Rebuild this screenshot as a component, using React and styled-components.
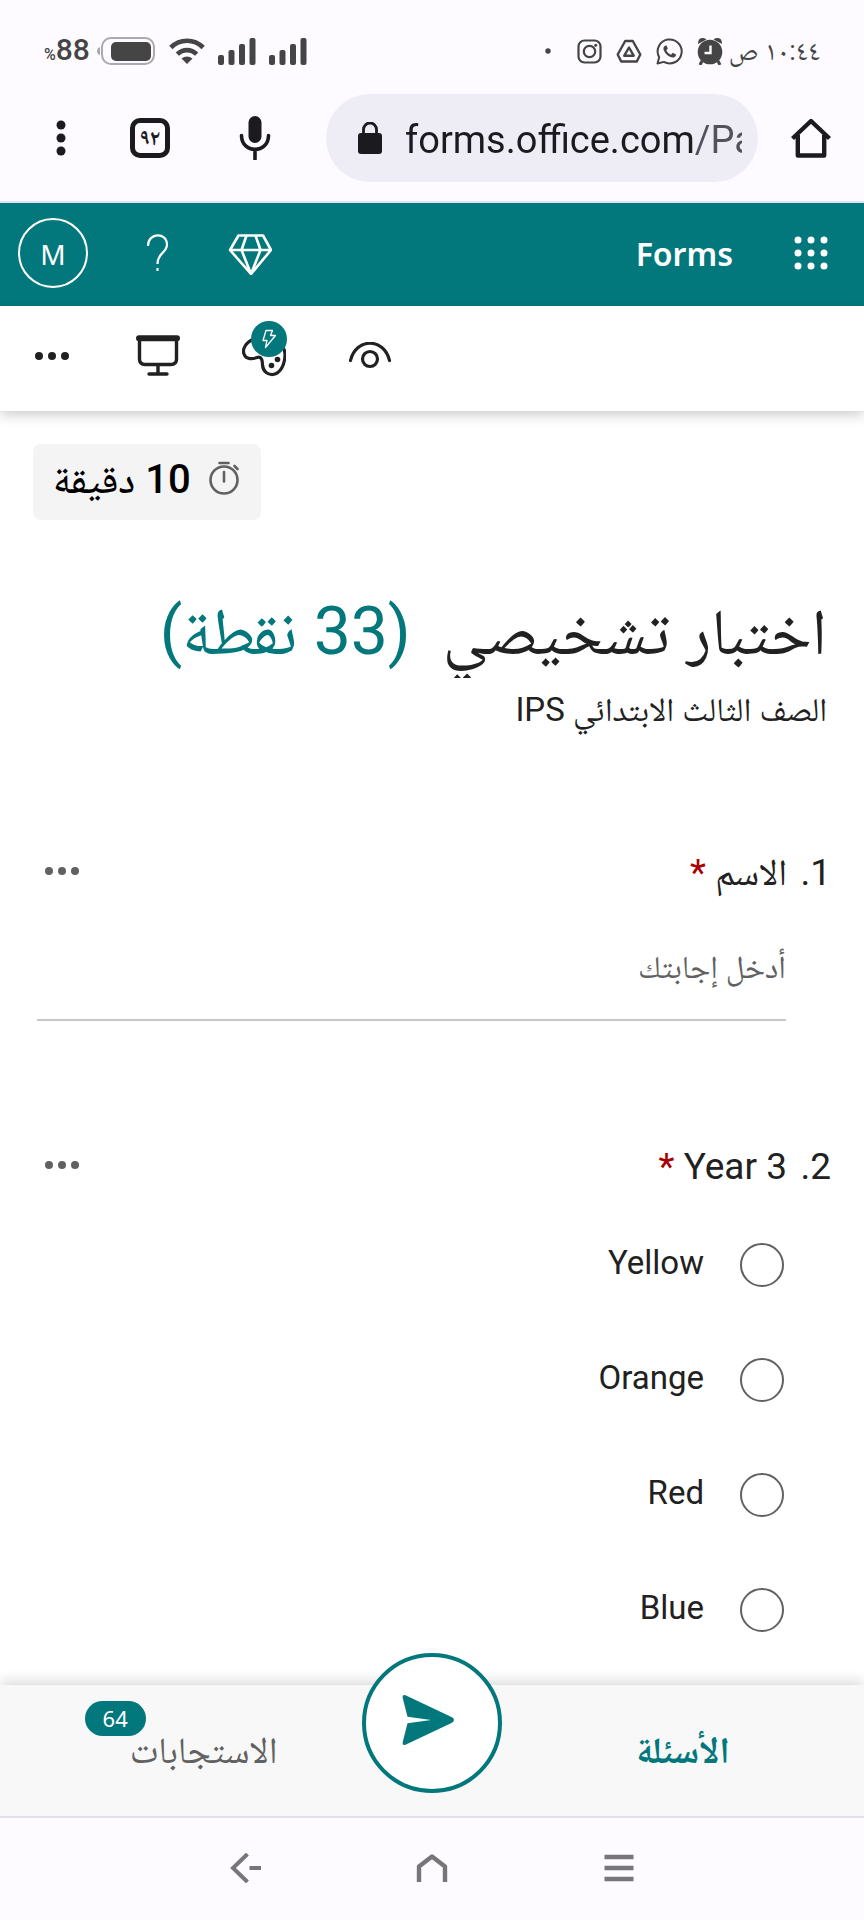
import React, { useState } from "react";
import styled, { createGlobalStyle } from "styled-components";

const TEAL = "#03787c";
const INK = "#212121";
const GREY = "#616161";
const CHROME_INK = "#1b1b1f";
const STATUS_INK = "#454545";

const GlobalStyle = createGlobalStyle`
  * {
    box-sizing: border-box;
  }

  body {
    margin: 0;
    background: #ffffff;
    color: ${INK};
    font-family: Roboto, "Noto Naskh Arabic", "Noto Sans", "DejaVu Sans", sans-serif;
  }

  button,
  input {
    font-family: inherit;
    margin: 0;
  }
`;

const PageS = styled.div`
  min-height: 100vh;
  display: flex;
  flex-direction: column;
`;

const IconButton = styled.button`
  display: flex;
  align-items: center;
  justify-content: center;
  flex: none;
  width: ${({ $width }) => $width || 44}px;
  height: 44px;
  padding: 0;
  border: none;
  background: none;
  color: inherit;
  cursor: pointer;

  svg {
    flex: none;
    display: block;
  }
`;

// phone status bar
const StatusBarS = styled.header`
  display: flex;
  justify-content: space-between;
  align-items: center;
  height: 94px;
  padding: 8px 44px 0;
  background: #fdfbff;
  color: ${STATUS_INK};

  svg {
    display: block;
    flex: none;
  }
`;

const StatusGroup = styled.div`
  display: flex;
  align-items: center;
  gap: ${({ $gap }) => $gap}px;
`;

const Clock = styled.time`
  font-size: 27px;
  line-height: 32px;
  margin-left: -8px;
`;

const BatteryLevel = styled.span`
  direction: ltr;
  font-size: 30px;
  font-weight: 500;
  line-height: 32px;
  margin-right: -6px;
  padding-top: 3px;

  small {
    font-size: 16px;
  }
`;

// browser toolbar
const BrowserBarS = styled.div`
  display: flex;
  align-items: center;
  height: 109px;
  padding: 0 31px 19px 39px;
  border-bottom: 2px solid #e2e0ec;
  background: #fdfbff;
  color: ${CHROME_INK};
`;

const AddressBar = styled.label`
  direction: ltr;
  display: flex;
  align-items: center;
  flex: 1;
  min-width: 0;
  height: 88px;
  margin: 0 31px 0 33px;
  padding: 0 16px 0 31px;
  border-radius: 44px;
  background: #eeedf6;

  svg {
    flex: none;
  }
`;

/* the host is dark, the path after it is dimmed */
const AddressInput = styled.input`
  flex: 1;
  min-width: 0;
  margin-left: 22px;
  padding: 4px 0 0;
  border: none;
  outline: none;
  font-size: 38px;
  line-height: 48px;
  color: transparent;
  background: linear-gradient(90deg, ${CHROME_INK} 290px, #53525c 290px);
  background-clip: text;
`;

const TabCount = styled.span`
  display: flex;
  align-items: center;
  justify-content: center;
  width: 40px;
  height: 40px;
  border: 5px solid ${CHROME_INK};
  border-radius: 10px;
  font-size: 22px;
  font-weight: 700;
  line-height: 24px;
`;

// Forms header
const SuiteBarS = styled.div`
  display: flex;
  align-items: center;
  height: 103px;
  padding: 0 31px 4px 18px;
  background: ${TEAL};
  color: #ffffff;
`;

const AppName = styled.a`
  margin-right: 56px;
  margin-left: auto;
  color: #ffffff;
  font-family: "Noto Sans", sans-serif;
  font-size: 32px;
  font-weight: 600;
  line-height: 48px;
  text-decoration: none;
  padding-top: 2px;
`;

const Avatar = styled.button`
  width: 70px;
  height: 70px;
  padding: 2px 0 0;
  border: 2px solid #ffffff;
  border-radius: 50%;
  background: none;
  color: #ffffff;
  font-family: "Noto Sans", sans-serif;
  font-size: 28px;
  cursor: pointer;
`;

const SuiteActions = styled.div`
  display: flex;
  align-items: center;
  gap: 48px;
`;

const CommandBarS = styled.div`
  direction: ltr;
  display: flex;
  align-items: center;
  gap: 62px;
  height: 105px;
  padding: 0 30px 6px;
  background: #ffffff;
  box-shadow: 0 4px 12px rgba(0, 0, 0, 0.2);
`;

const ThemeButton = styled(IconButton)`
  position: relative;
`;

const ThemeBadge = styled.span`
  position: absolute;
  top: -13px;
  right: -1px;
  display: flex;
  align-items: center;
  justify-content: center;
  width: 36px;
  height: 36px;
  border-radius: 50%;
  background: ${TEAL};
  color: #ffffff;
`;

// form body
const MainS = styled.main`
  flex: 1;
  padding: 33px 33px 18px;
`;

const Timer = styled.div`
  direction: ltr;
  display: flex;
  align-items: center;
  gap: 18px;
  width: fit-content;
  height: 76px;
  padding: 0 20px 4px;
  border-radius: 8px;
  background: #f4f4f4;
  color: #000000;
  font-size: 40px;
  font-weight: 500;
  line-height: 48px;
`;

const FormTitle = styled.h1`
  margin: 70px 4px 8px;
  padding-bottom: 4px;
  overflow: hidden;
  font-size: 65px;
  font-weight: 400;
  line-height: 84px;
`;

const Points = styled.span`
  margin-right: 32px;
  color: ${TEAL};
  font-size: 66px;
`;

const Subtitle = styled.p`
  margin: 0 4px 115px;
  font-size: 33px;
  line-height: 48px;
`;

const QuestionS = styled.section`
  & + & {
    margin-top: 122px;
  }
`;

const QuestionHead = styled.div`
  display: flex;
  align-items: flex-start;
  height: 48px;
  font-size: 37px;
  line-height: 48px;

  button {
    color: ${GREY};
  }
`;

const QuestionNumber = styled.span`
  width: 44px;
`;

const QuestionText = styled.h2`
  flex: 1;
  margin: 0;
  font-size: 37px;
  font-weight: 400;
  line-height: 48px;
`;

const Required = styled.span`
  color: #a80000;
`;

const AnswerInput = styled.input`
  display: block;
  width: calc(100% - 49px);
  height: 108px;
  margin: 16px 45px 0 4px;
  padding: 2px 0 0;
  border: none;
  border-bottom: 2px solid #c8c8c8;
  outline: none;
  background: none;
  color: ${INK};
  font-size: 32px;

  &::placeholder {
    color: ${GREY};
    opacity: 1;
  }
`;

const OptionList = styled.div`
  margin: 16px 47px 0 0;
`;

const Option = styled.label`
  display: flex;
  align-items: center;
  gap: 36px;
  height: 115px;
  font-size: 33px;
  line-height: 48px;
  cursor: pointer;

  span {
    padding-bottom: 3px;
  }
`;

const Radio = styled.input`
  appearance: none;
  width: 44px;
  height: 44px;
  border: 2px solid ${GREY};
  border-radius: 50%;

  &:checked {
    border: 12px solid ${TEAL};
  }
`;

// footer with tabs
const TabBarS = styled.nav`
  display: grid;
  grid-template-columns: 1fr 140px 1fr;
  height: 133px;
  border-bottom: 2px solid #e2e0ec;
  background: #f8f8f8;
  box-shadow: 0 -4px 12px rgba(0, 0, 0, 0.14);
`;

const TabButton = styled.button`
  display: flex;
  justify-content: center;
  padding: 16px 0 0;
  border: none;
  background: none;
  color: ${({ $active }) => ($active ? TEAL : GREY)};
  font-size: 37px;
  font-weight: ${({ $active }) => ($active ? 700 : 400)};
  line-height: 48px;
  cursor: pointer;
`;

const TabLabel = styled.span`
  padding-top: 26px;
`;

const CountBadge = styled.span`
  height: 35px;
  padding: 0 18px;
  margin-right: -16px;
  border-radius: 18px;
  background: ${TEAL};
  color: #ffffff;
  font-family: "Noto Sans", sans-serif;
  font-size: 22px;
  font-weight: 400;
  line-height: 35px;
`;

const SendButton = styled.button`
  display: flex;
  align-items: center;
  justify-content: center;
  width: 140px;
  height: 140px;
  margin-top: -32px;
  padding: 0 8px 6px 0;
  border: 4px solid ${TEAL};
  border-radius: 50%;
  background: #ffffff;
  color: ${TEAL};
  cursor: pointer;
`;

const SystemNavS = styled.nav`
  display: flex;
  justify-content: center;
  gap: 143px;
  height: 102px;
  padding-top: 28px;
  background: #fdfbff;
  color: #767578;
`;

const Dots = ({ r = 4, step = 13 }) => (
  <svg width="36" height="12" viewBox="-18 -6 36 12" fill="currentColor">
    <circle cx={-step} r={r} />
    <circle r={r} />
    <circle cx={step} r={r} />
  </svg>
);

const SignalIcon = () => (
  <svg width="38" height="28" viewBox="0 0 38 28" fill="currentColor">
    <rect x="0" y="18" width="6" height="10" rx="2" />
    <rect x="10.500" y="13" width="6" height="15" rx="2" />
    <rect x="21" y="7" width="6" height="21" rx="2" />
    <rect x="31.500" y="1" width="6" height="27" rx="2" />
  </svg>
);

const WifiIcon = () => (
  <svg width="36" height="28" viewBox="0 0 36 28" fill="none" stroke="currentColor" strokeWidth="4.600">
    <path d="M1.800 10.500C11 1.500 25 1.500 34.200 10.500" />
    <path d="M8.300 17.200C14 11.700 22 11.700 27.700 17.200" />
    <path d="M12.500 21.500Q18 17.500 23.500 21.500L18 27Z" fill="currentColor" stroke="none" />
  </svg>
);

const BatteryIcon = () => (
  <svg width="59" height="28" viewBox="0 0 59 28">
    <path d="M3 10Q0 11 0 14T3 18Z" fill="#aaa9ac" />
    <rect x="5" y="1" width="52" height="26" rx="9" fill="none" stroke="#aaa9ac" strokeWidth="2" />
    <rect x="14" y="5" width="40" height="19" rx="5" fill="currentColor" />
  </svg>
);

const AlarmIcon = () => (
  <svg width="26" height="28" viewBox="0 0 26 28" fill="currentColor">
    <circle cx="13" cy="15" r="12.300" />
    <path d="M1 7Q1 1 5 1Q8 0.500 9.500 2.500Z" />
    <path d="M25 7Q25 1 21 1Q18 0.500 16.500 2.500Z" />
    <path d="M5 24L3 28M21 24L23 28" stroke="currentColor" strokeWidth="3" />
    <path d="M13.500 8.500V16H7.500" fill="none" stroke="#fdfbff" strokeWidth="2.400" />
  </svg>
);

const WhatsAppIcon = () => (
  <svg width="27" height="27" viewBox="0 0 27 27">
    <path
      d="M1.500 25.500L3.200 19.300A12 12 0 1 1 7.800 23.900Z"
      fill="none"
      stroke="currentColor"
      strokeWidth="2"
      strokeLinejoin="round"
    />
    <path
      d="M9.300 7.500Q7 8.500 7.400 11.500Q8.500 15 12 17.800Q15.500 20.300 18.300 19.300Q20.300 18.300 20 16.500L16.800 14.800L15 16.800Q11.800 15.400 10.300 12.400L11.800 10.600L10.500 7.500Z"
      fill="currentColor"
    />
  </svg>
);

const DriveIcon = () => (
  <svg width="26" height="25" viewBox="0 0 26 25" fill="none" stroke="currentColor" strokeWidth="2.400" strokeLinejoin="round">
    <path d="M9.200 2H16.800L24.300 15.500L20.800 22.500H5.200L1.700 15.500Z" />
    <path d="M13 8.500L17.700 16.700H8.300Z" />
  </svg>
);

const InstagramIcon = () => (
  <svg width="25" height="25" viewBox="0 0 25 25" fill="none" stroke="currentColor" strokeWidth="2.200">
    <rect x="1.500" y="1.500" width="22" height="22" rx="6" />
    <circle cx="12.500" cy="12.500" r="5.700" />
    <circle cx="18.700" cy="6.300" r="1.500" fill="currentColor" stroke="none" />
  </svg>
);

const StatusBar = () => (
  <StatusBarS>
    <StatusGroup $gap={14}>
      <Clock>١٠:٤٤ ص</Clock>
      <AlarmIcon />
      <WhatsAppIcon />
      <DriveIcon />
      <InstagramIcon />
      <svg width="28" height="6" viewBox="0 0 28 6" fill="currentColor">
        <circle cx="13" cy="3" r="2.700" />
      </svg>
    </StatusGroup>
    <StatusGroup $gap={13}>
      <SignalIcon />
      <SignalIcon />
      <WifiIcon />
      <BatteryIcon />
      <BatteryLevel>
        <small>%</small>88
      </BatteryLevel>
    </StatusGroup>
  </StatusBarS>
);

const BrowserBar = () => (
  <BrowserBarS>
    <IconButton aria-label="الصفحة الرئيسية">
      <svg width="40" height="40" viewBox="0 0 40 40" fill="none" stroke="currentColor" strokeWidth="4.400" strokeLinejoin="round">
        <path d="M1.500 20.500L20 3L38.500 20.500" />
        <path d="M6.800 17V37.500H33.200V17" />
      </svg>
    </IconButton>
    <AddressBar>
      <svg width="26" height="32" viewBox="0 0 26 32">
        <rect x="1" y="11" width="24" height="21" rx="3" fill="currentColor" />
        <path d="M6.500 12V7.500A6.500 6.500 0 0 1 19.500 7.500V12" fill="none" stroke="currentColor" strokeWidth="2.800" />
      </svg>
      <AddressInput aria-label="العنوان" defaultValue="forms.office.com/Pages" />
    </AddressBar>
    <IconButton aria-label="بحث صوتي" $width={76}>
      <svg width="32" height="44" viewBox="0 0 32 44">
        <rect x="9.500" y="0" width="13" height="27" rx="6.500" fill="currentColor" />
        <path d="M2.500 19.500C2.500 38 29.500 38 29.500 19.500M16 34V43" fill="none" stroke="currentColor" strokeWidth="3.600" strokeLinecap="round" />
      </svg>
    </IconButton>
    <IconButton aria-label="علامات التبويب" $width={134}>
      <TabCount>٩٢</TabCount>
    </IconButton>
    <IconButton aria-label="المزيد">
      <svg width="12" height="38" viewBox="0 0 12 38" fill="currentColor">
        <circle cx="6" cy="6" r="4.500" />
        <circle cx="6" cy="19" r="4.500" />
        <circle cx="6" cy="32" r="4.500" />
      </svg>
    </IconButton>
  </BrowserBarS>
);

const SuiteBar = () => (
  <SuiteBarS>
    <IconButton aria-label="التطبيقات">
      <svg width="36" height="36" viewBox="-18 -18 36 36" fill="currentColor">
        {[-13, 0, 13].map((y) =>
          [-13, 0, 13].map((x) => <circle key={`${x}${y}`} cx={x} cy={y} r="3.500" />)
        )}
      </svg>
    </IconButton>
    <AppName href="#">Forms</AppName>
    <SuiteActions>
      <IconButton aria-label="الترقية">
        <svg width="44" height="44" viewBox="-1 -3 44 44" fill="none" stroke="currentColor" strokeWidth="2.600" strokeLinejoin="round">
          <path d="M9.500 1.500H34L42 16L22 40L1 16Z" />
          <path d="M1 16H42M17.500 1.500L12.500 16L22 40L31.500 16L26.500 1.500" />
        </svg>
      </IconButton>
      <IconButton aria-label="تعليمات">
        <svg width="24" height="38" viewBox="1 0 24 38" fill="none" stroke="currentColor" strokeWidth="2.200">
          <path d="M3 12C3 -2 22 -2 22 10.500C22 19 12.500 18.500 12.500 30" />
          <rect x="11.400" y="34" width="2.200" height="3" fill="currentColor" stroke="none" />
        </svg>
      </IconButton>
      <Avatar>M</Avatar>
    </SuiteActions>
  </SuiteBarS>
);

const CommandBar = () => (
  <CommandBarS>
    <IconButton aria-label="خيارات أخرى">
      <Dots />
    </IconButton>
    <IconButton aria-label="تقديم">
      <svg width="44" height="42" viewBox="0 0 44 42" fill="none" stroke="currentColor" strokeWidth="3.400" strokeLinecap="round">
        <path d="M3 3.200H41" strokeWidth="6" />
        <path d="M3.500 5V24Q3.500 29.500 9 29.500H35Q40.500 29.500 40.500 24V5M22 30V38M13 39H31" />
      </svg>
    </IconButton>
    <ThemeButton aria-label="السمة">
      <svg width="44" height="44" viewBox="0 0 44 44" fill="none" stroke="currentColor" strokeWidth="3.200">
        <path d="M12 5C4 8 0 15 2 20C4 26 11 25 15 23.500C20 22 20.500 27 20.500 31C21 37 25 41 31 40.500C39 39 43 30 43 20C42 10 35 3 24 2" />
        <circle cx="35.500" cy="25.500" r="2.800" fill="currentColor" stroke="none" />
        <circle cx="29.500" cy="31.500" r="2.800" fill="currentColor" stroke="none" />
      </svg>
      <ThemeBadge>
        <svg width="16" height="20" viewBox="0 0 16 20" fill="none" stroke="currentColor" strokeWidth="1.300" strokeLinejoin="round">
          <path d="M5 1.500H11.500L9.500 6.500H14.500L4.500 18.500L6 11.500H2Z" />
        </svg>
      </ThemeBadge>
    </ThemeButton>
    <IconButton aria-label="معاينة">
      <svg width="44" height="28" viewBox="0 0 44 28" fill="none" stroke="currentColor" strokeWidth="3.200" strokeLinecap="round">
        <path d="M2.500 18.500C8 -4.500 36 -4.500 41.500 18.500" />
        <circle cx="22" cy="17" r="7.500" />
      </svg>
    </IconButton>
  </CommandBarS>
);

const Question = ({ number, title, labelId, children }) => (
  <QuestionS>
    <QuestionHead>
      <QuestionNumber>{number}.</QuestionNumber>
      <QuestionText id={labelId}>
        {title} <Required>*</Required>
      </QuestionText>
      <IconButton aria-label="خيارات السؤال" $width={58}>
        <Dots />
      </IconButton>
    </QuestionHead>
    {children}
  </QuestionS>
);

const colours = ["Yellow", "Orange", "Red", "Blue"];

const App = () => {
  const [name, setName] = useState("");
  const [tab, setTab] = useState("questions");

  return (
    <PageS dir="rtl" lang="ar">
      <GlobalStyle />
      <StatusBar />
      <BrowserBar />
      <SuiteBar />
      <CommandBar />
      <MainS>
        <div dir="ltr">
          <Timer>
            <span dir="rtl">10 دقيقة</span>
            <svg width="32" height="38" viewBox="0 0 32 38" fill="none" stroke={GREY} strokeWidth="2.600">
              <circle cx="15" cy="19" r="13.500" />
              <path d="M15 11V20.500M10.500 2H19.500M25.500 5L28.500 8" strokeLinecap="round" />
            </svg>
          </Timer>
        </div>
        <FormTitle>
          اختبار تشخيصي<Points>(33 نقطة)</Points>
        </FormTitle>
        <Subtitle>الصف الثالث الابتدائي IPS</Subtitle>
        <Question number={1} title="الاسم" labelId="q-name">
          <AnswerInput
            aria-labelledby="q-name"
            placeholder="أدخل إجابتك"
            value={name}
            onChange={(e) => setName(e.target.value)}
          />
        </Question>
        <Question number={2} title="Year 3" labelId="q-year">
          <OptionList role="radiogroup" aria-labelledby="q-year">
            {colours.map((colour) => (
              <Option key={colour}>
                <Radio type="radio" name="year" value={colour} />
                <span>{colour}</span>
              </Option>
            ))}
          </OptionList>
        </Question>
      </MainS>
      <TabBarS>
        <TabButton $active={tab === "questions"} onClick={() => setTab("questions")}>
          <TabLabel>الأسئلة</TabLabel>
        </TabButton>
        <SendButton aria-label="إرسال">
          <svg width="54" height="52" viewBox="0 0 54 52" fill="currentColor">
            <path d="M4.500 1.300Q1.400 0.200 1.600 3.600L6.500 22.800L30 26L6.500 29.300L1.600 48.400Q1.400 51.800 4.500 50.700L51 28.700Q55 26 51 23.300Z" />
          </svg>
        </SendButton>
        <TabButton $active={tab === "answers"} onClick={() => setTab("answers")}>
          <TabLabel>الاستجابات</TabLabel>
          <CountBadge>64</CountBadge>
        </TabButton>
      </TabBarS>
      <SystemNavS>
        <IconButton aria-label="التطبيقات الأخيرة">
          <svg width="30" height="30" viewBox="0 0 30 30" fill="none" stroke="currentColor" strokeWidth="4.400">
            <path d="M0.500 4H29.500M0.500 15H29.500M0.500 26H29.500" />
          </svg>
        </IconButton>
        <IconButton aria-label="الشاشة الرئيسية">
          <svg width="32" height="30" viewBox="0 0 32 30" fill="none" stroke="currentColor" strokeWidth="4.400" strokeLinejoin="round">
            <path d="M3 29V13.500L16 3.500L29 13.500V29" />
          </svg>
        </IconButton>
        <IconButton aria-label="رجوع">
          <svg width="32" height="30" viewBox="-1 0 32 30" fill="none" stroke="currentColor" strokeWidth="4">
            <path d="M17.500 1L3 15L17.500 29M19.500 15H31" />
          </svg>
        </IconButton>
      </SystemNavS>
    </PageS>
  );
};

export default App;
